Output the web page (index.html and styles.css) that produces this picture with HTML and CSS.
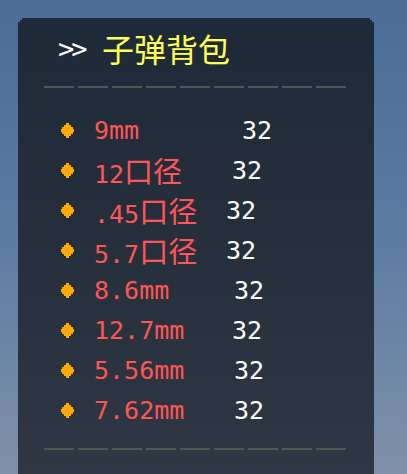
FILE: index.html
```
<!DOCTYPE html>
<html lang="zh">
<head>
<meta charset="utf-8">
<link rel="stylesheet" href="styles.css">
</head>
<body>
<div class="panel">
  <div class="title"><span class="chev">&gt;&gt;</span><span class="name">子弹背包</span></div>
  <div class="rule"></div>
  <ul class="list">
    <li class="row"><svg class="dia" viewBox="0 0 13 15" shape-rendering="crispEdges"><path d="M5 0h3v2h2v2h2v2h1v3h-1v2h-2v2h-2v2h-3v-2h-2v-2h-2v-2h-1v-3h1v-2h2v-2h2z" fill="#ffaa00"/></svg><span class="label">9mm</span><span class="count s16">32</span></li>
    <li class="row"><svg class="dia" viewBox="0 0 13 15" shape-rendering="crispEdges"><path d="M5 0h3v2h2v2h2v2h1v3h-1v2h-2v2h-2v2h-3v-2h-2v-2h-2v-2h-1v-3h1v-2h2v-2h2z" fill="#ffaa00"/></svg><span class="label">12<span class="cjk">口径</span></span><span class="count s6">32</span></li>
    <li class="row"><svg class="dia" viewBox="0 0 13 15" shape-rendering="crispEdges"><path d="M5 0h3v2h2v2h2v2h1v3h-1v2h-2v2h-2v2h-3v-2h-2v-2h-2v-2h-1v-3h1v-2h2v-2h2z" fill="#ffaa00"/></svg><span class="label">.45<span class="cjk">口径</span></span><span class="count s0">32</span></li>
    <li class="row"><svg class="dia" viewBox="0 0 13 15" shape-rendering="crispEdges"><path d="M5 0h3v2h2v2h2v2h1v3h-1v2h-2v2h-2v2h-3v-2h-2v-2h-2v-2h-1v-3h1v-2h2v-2h2z" fill="#ffaa00"/></svg><span class="label">5.7<span class="cjk">口径</span></span><span class="count s0">32</span></li>
    <li class="row"><svg class="dia" viewBox="0 0 13 15" shape-rendering="crispEdges"><path d="M5 0h3v2h2v2h2v2h1v3h-1v2h-2v2h-2v2h-3v-2h-2v-2h-2v-2h-1v-3h1v-2h2v-2h2z" fill="#ffaa00"/></svg><span class="label">8.6mm</span><span class="count s8">32</span></li>
    <li class="row"><svg class="dia" viewBox="0 0 13 15" shape-rendering="crispEdges"><path d="M5 0h3v2h2v2h2v2h1v3h-1v2h-2v2h-2v2h-3v-2h-2v-2h-2v-2h-1v-3h1v-2h2v-2h2z" fill="#ffaa00"/></svg><span class="label">12.7mm</span><span class="count s6">32</span></li>
    <li class="row"><svg class="dia" viewBox="0 0 13 15" shape-rendering="crispEdges"><path d="M5 0h3v2h2v2h2v2h1v3h-1v2h-2v2h-2v2h-3v-2h-2v-2h-2v-2h-1v-3h1v-2h2v-2h2z" fill="#ffaa00"/></svg><span class="label">5.56mm</span><span class="count s8">32</span></li>
    <li class="row"><svg class="dia" viewBox="0 0 13 15" shape-rendering="crispEdges"><path d="M5 0h3v2h2v2h2v2h1v3h-1v2h-2v2h-2v2h-3v-2h-2v-2h-2v-2h-1v-3h1v-2h2v-2h2z" fill="#ffaa00"/></svg><span class="label">7.62mm</span><span class="count s8">32</span></li>
  </ul>
  <div class="rule"></div>
</div>
</body>
</html>
```
FILE: styles.css
```
html, body {
  margin: 0;
  padding: 0;
  height: 100%;
  overflow: hidden;
}
body {
  background: linear-gradient(180deg, #4b6c97 0%, #5c7ba3 50%, #7f91a8 100%);
  font-family: "DejaVu Sans Mono", "Noto Sans CJK SC", monospace;
}
.panel {
  margin: 18px 0 0 18px;
  width: 356px;
  height: 470px;
  box-sizing: border-box;
  padding-top: 10px;
  background: linear-gradient(180deg, #1e2a39 0%, #262f3c 50%, #2f3844 100%);
  clip-path: polygon(4px 0, calc(100% - 4px) 0, calc(100% - 4px) 2px, calc(100% - 2px) 2px, calc(100% - 2px) 4px, 100% 4px, 100% 100%, 0 100%, 0 4px, 2px 4px, 2px 2px, 4px 2px);
}
.title {
  display: flex;
  align-items: center;
  height: 40px;
  padding-left: 40px;
}
.chev {
  color: #ffffff;
  font-size: 27px;
  letter-spacing: -3px;
  width: 44px;
}
.name {
  color: #ffff55;
  font-family: "Noto Sans CJK SC", sans-serif;
  font-size: 32px;
  line-height: 40px;
}
.rule {
  margin: 18px 0 0 26px;
  width: 302px;
  height: 2px;
  background: repeating-linear-gradient(90deg, #555555 0 30px, transparent 30px 34px);
}
.list {
  list-style: none;
  margin: 22px 0 15px 0;
  padding: 0 0 0 43px;
}
.row {
  display: flex;
  align-items: center;
  height: 40px;
  font-size: 25px;
}
.dia {
  width: 13px;
  height: 15px;
  margin-right: 20px;
  flex: none;
}
.label {
  color: #ff5555;
  width: 132px;
  white-space: nowrap;
}
.cjk {
  font-family: "Noto Sans CJK SC", sans-serif;
  font-size: 29px;
}
.count {
  color: #ffffff;
}
.s0 { margin-left: 0; }
.s6 { margin-left: 6px; }
.s8 { margin-left: 8px; }
.s16 { margin-left: 16px; }
```
